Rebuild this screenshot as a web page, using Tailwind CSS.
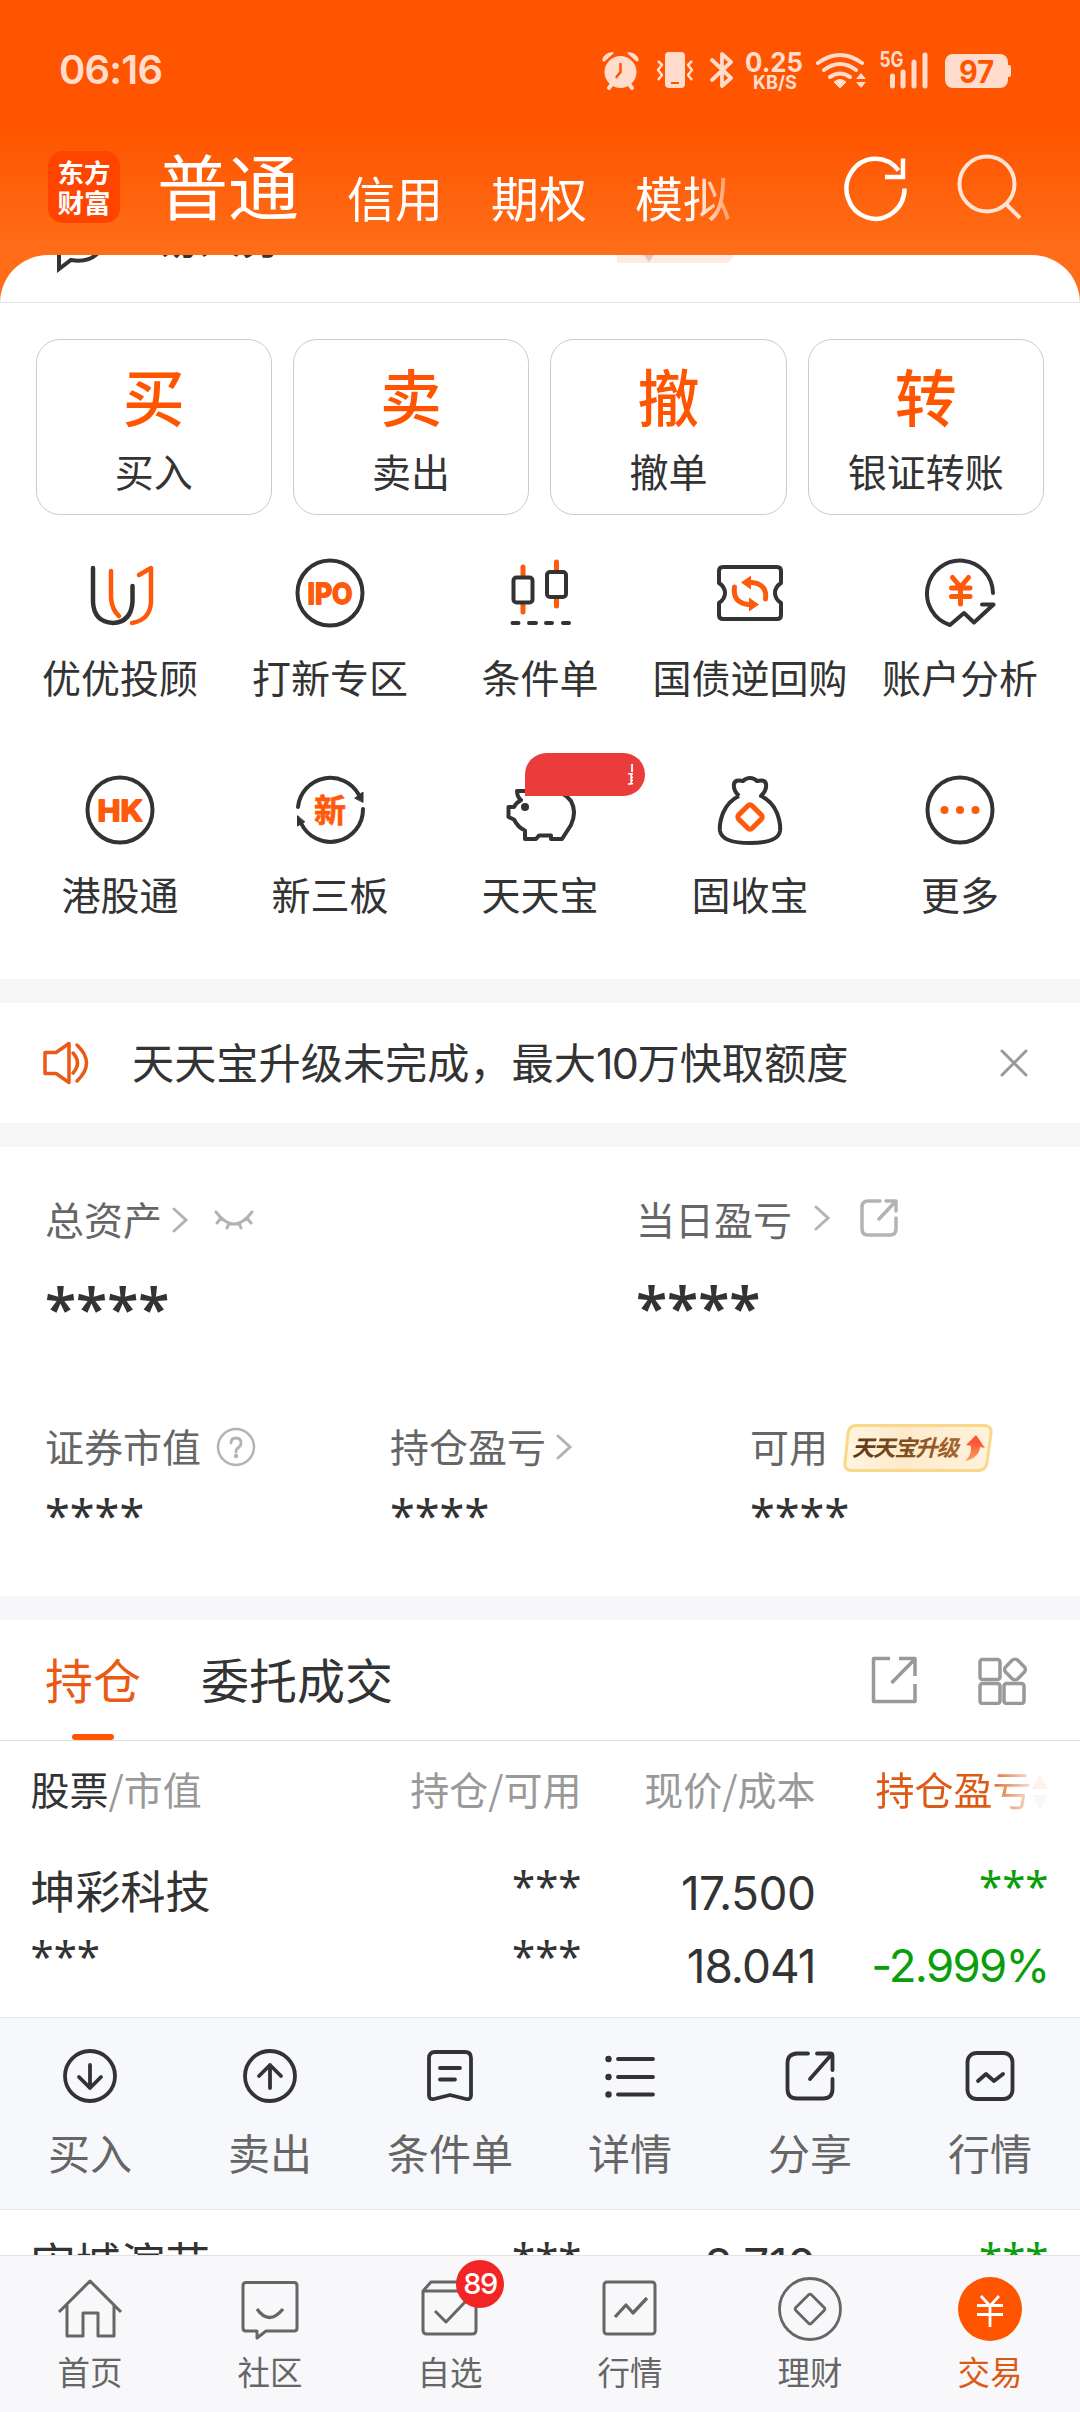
<!DOCTYPE html>
<html lang="zh-CN">
<head>
<meta charset="utf-8">
<title>交易</title>
<script src="https://cdn.jsdelivr.net/npm/@tailwindcss/browser@4"></script>
</head>
<body class="w-[1080px] h-[2412px] overflow-hidden bg-white font-['Noto_Sans_CJK_SC',sans-serif] font-normal text-[#333] whitespace-nowrap">
<div class="flex flex-col h-[2412px] w-[1080px]">

  <!-- Header -->
  <header class="h-[303px] shrink-0 flex flex-col bg-[linear-gradient(#ff5500_0px,#ff5500_130px,#ff6d18_250px)]">
    <div class="h-[140px] shrink-0 flex items-center pl-[59px] pr-[69px] text-[#ffdccc]">
      <span class="font-['Inter',sans-serif] font-semibold text-[40px] tracking-[-0.8px] leading-[60px]">06:16</span>
      <svg class="ml-auto shrink-0" width="410" height="44" viewBox="601 48 410 44" fill="none">
        <!-- alarm -->
        <g fill="#ffdccc">
          <circle cx="620.500" cy="72" r="16"/>
          <path d="M603 60a9 9 0 0 1 10-7l-9 8zM638 60a9 9 0 0 0-10-7l9 8z" stroke="#ffdccc" stroke-width="1.500" stroke-linejoin="round"/>
        </g>
        <path d="M612 84l-3 4M629 84l3 4" stroke="#ffdccc" stroke-width="4" stroke-linecap="round"/>
        <path d="M620.500 64v8l-4 5" stroke="#ff5500" stroke-width="2.500" stroke-linecap="round"/>
        <!-- vibrate -->
        <rect x="665" y="52" width="20" height="36" rx="4" fill="#ffdccc"/>
        <path d="M671 83h8" stroke="#ff5500" stroke-width="2"/>
        <path d="M658 61l4 4-4 5 4 5-4 5M692 61l-4 4 4 5-4 5 4 5" stroke="#ffdccc" stroke-width="2.500" stroke-linejoin="round"/>
        <!-- bluetooth -->
        <path d="M712 60l19 18-9 8V54l9 8-19 18" stroke="#ffdccc" stroke-width="3.800" stroke-linejoin="round" stroke-linecap="round"/>
        <!-- network speed -->
        <text x="745" y="71.500" font-family="Inter" font-weight="700" font-size="27.500" fill="#ffdccc" textLength="58" lengthAdjust="spacingAndGlyphs">0.25</text>
        <text x="753" y="89" font-family="Inter" font-weight="700" font-size="18.500" fill="#ffdccc" textLength="44" lengthAdjust="spacingAndGlyphs">KB/S</text>
        <!-- wifi -->
        <g stroke="#ffdccc" stroke-width="4" stroke-linecap="round">
          <path d="M818 63q22-16 44 0M824 70q16-12 32 0M830 77q10-7 20 0"/>
        </g>
        <path d="M834 82q6-5 12 0l-6 6z" fill="#ffdccc" stroke="#ffdccc" stroke-linejoin="round"/>
        <path d="M856 79l5-6 5 6zM856 82l5 6 5-6z" fill="#ffdccc"/>
        <!-- signal -->
        <text x="879.500" y="67" font-family="Inter" font-weight="700" font-size="21" fill="#ffdccc" textLength="24" lengthAdjust="spacingAndGlyphs">5G</text>
        <path d="M892.500 76v10M903 72v14M914 62v24M925 55v31" stroke="#ffdccc" stroke-width="5" stroke-linecap="round"/>
        <!-- battery -->
        <rect x="945" y="54" width="63" height="34" rx="8" fill="#ffdccc"/>
        <rect x="1005" y="65" width="6" height="12" rx="2" fill="#ffdccc"/>
        <text x="959" y="82.500" font-family="Inter" font-weight="700" font-size="31" fill="#ff5500" textLength="35" lengthAdjust="spacingAndGlyphs">97</text>
      </svg>
    </div>
    <div class="h-[115px] shrink-0 flex items-start pl-[48px] pr-[58px] text-white">
      <div class="mt-[11px] w-[72px] h-[72px] rounded-[15px] bg-[#ff4400] flex flex-col items-center justify-center text-[26.500px] leading-[30px] font-bold">
        <span>东方</span><span>财富</span>
      </div>
      <span class="ml-[37px] mt-[3px] w-[144px] text-[71px] leading-[80px]">普通</span>
      <div class="ml-[46px] mt-[26px] flex gap-[48px] text-[48px] leading-[60px] [mask-image:linear-gradient(to_right,black_345px,transparent_405px)] w-[420px]">
        <span class="w-[96px]">信用</span><span class="w-[96px]">期权</span><span class="w-[96px]">模拟</span>
      </div>
      <svg class="ml-auto mt-[10px] shrink-0" width="180" height="74" viewBox="842 150 180 74" fill="none" stroke="white" stroke-width="4.500">
        <path d="M904.500 188.500a29 30 0 1 1-6-18M903 158.500v18.500h-18"/>
        <g stroke="#ffe3d4" stroke-width="4"><ellipse cx="987" cy="184" rx="27.500" ry="27.500"/><path d="M1006 204l14 14"/></g>
      </svg>
    </div>
    <div class="h-[48px] shrink-0 rounded-t-[48px] bg-white border-b border-[#e5e5e5] overflow-hidden flex items-start">
      <svg class="ml-[57px] shrink-0" width="50" height="24" viewBox="57 255 50 24" fill="none" stroke="#333" stroke-width="4"><path d="M59 245v20l0-8v12l12-9q16 3 26-6l4-6"/></svg>
      <span class="ml-[50px] -mt-[49px] w-[135px] text-[42px] leading-[60px] font-medium">易人分</span>
      <div class="ml-[325px] w-[116px] h-[8px] bg-[#fdece4] rounded-bl-[12px] rounded-br-[30px] flex"><svg class="ml-[27px]" width="10" height="7"><path d="M0 0h10L5 7z" fill="#e5c4b6"/></svg></div>
    </div>
  </header>

  <!-- Quick trade cards -->
  <section class="shrink-0 pt-[36px] pl-[35.500px] pr-[36px] grid grid-cols-4 gap-[21px] text-center">
    <div class="h-[176px] border border-[#ccc] rounded-[24px] flex flex-col items-center"><span class="mt-[23px] h-[64px] leading-[64px] text-[62px] text-[#ff5500] font-medium">买</span><span class="mt-[22px] text-[39px] leading-[42px]">买入</span></div>
    <div class="h-[176px] border border-[#ccc] rounded-[24px] flex flex-col items-center"><span class="mt-[23px] h-[64px] leading-[64px] text-[62px] text-[#ff5500] font-medium">卖</span><span class="mt-[22px] text-[39px] leading-[42px]">卖出</span></div>
    <div class="h-[176px] border border-[#ccc] rounded-[24px] flex flex-col items-center"><span class="mt-[23px] h-[64px] leading-[64px] text-[62px] text-[#ff5500] font-medium">撤</span><span class="mt-[22px] text-[39px] leading-[42px]">撤单</span></div>
    <div class="h-[176px] border border-[#ccc] rounded-[24px] flex flex-col items-center"><span class="mt-[23px] h-[64px] leading-[64px] text-[62px] text-[#ff5500] font-medium">转</span><span class="mt-[22px] text-[39px] leading-[42px]">银证转账</span></div>
  </section>

  <!-- Feature grid -->
  <section class="shrink-0 h-[464px] pt-[42px] px-[15px] grid grid-cols-5 auto-rows-[142px] gap-y-[75px] text-[39px] leading-[42px]">
    <div class="flex flex-col items-center gap-[26px]">
      <svg width="72" height="72" fill="none" stroke-width="4.500" stroke-linecap="round" stroke-linejoin="round"><path stroke="#333" d="M9 11v34q1 20 20 21 18-1 19.500-21V29"/><path stroke="#ff5a0c" d="M27 14v27q1 12 8 18M55 18l12-7v34q-1 18-19 21"/></svg>
      <span>优优投顾</span></div>
    <div class="flex flex-col items-center gap-[26px]">
      <svg width="72" height="72" fill="none"><circle cx="36" cy="36" r="32.500" stroke="#333" stroke-width="4"/><text x="13.500" y="46.500" font-family="Inter" font-size="29" font-weight="700" fill="#ff5a0c" stroke="#ff5a0c" stroke-width="1.800" stroke-linejoin="round" textLength="45" lengthAdjust="spacingAndGlyphs">IPO</text></svg>
      <span>打新专区</span></div>
    <div class="flex flex-col items-center gap-[26px]">
      <svg width="72" height="72" fill="none" stroke-width="5" stroke-linecap="round"><path stroke="#ff5a0c" d="M19 10v8M19 47v8M52.500 5v8M52.500 42v7"/><path stroke="#333" stroke-width="4" d="M8.500 66h6M25 66h7M42 66h6M59 66h6"/><rect x="9.500" y="20.500" width="19" height="25" rx="3" stroke="#333" stroke-width="4"/><rect x="43" y="15" width="19" height="25" rx="3" stroke="#333" stroke-width="4"/></svg>
      <span>条件单</span></div>
    <div class="flex flex-col items-center gap-[26px]">
      <svg width="72" height="72" fill="none" stroke-linejoin="round" stroke-linecap="round"><path stroke="#333" stroke-width="4" d="M9 10H63q4 0 4 4V26q-6 4-6 10t6 10V58q0 4-4 4H9q-4 0-4-4V46q6-4 6-10T5 26V14q0-4 4-4z"/><path stroke="#ff5a0c" stroke-width="5" d="M20.500 30q-2 16 14 17.500h5M51.500 42q2-15-14-16.500h-5"/><path fill="#ff5a0c" d="M27 25.500L37 18.500v14zM45 47.500L35 40.500v14z"/></svg>
      <span>国债逆回购</span></div>
    <div class="flex flex-col items-center gap-[26px]">
      <svg width="72" height="72" fill="none" stroke-linejoin="round" stroke-linecap="round"><path stroke="#333" stroke-width="4" d="M69 36A33 33 0 1 0 26 68L40 56 50 65.500 69.500 47.500H58"/><path stroke="#ff5a0c" stroke-width="5" d="M28.500 20.500L36.500 30l8-9.500M36.500 30v17M27.500 31h18.500M27.500 39.500h18.500"/></svg>
      <span>账户分析</span></div>
    <div class="flex flex-col items-center gap-[26px]">
      <svg width="72" height="72" fill="none"><circle cx="36" cy="36" r="32.500" stroke="#333" stroke-width="4"/><text x="13.500" y="46.500" font-family="Inter" font-size="29" font-weight="700" fill="#ff5a0c" stroke="#ff5a0c" stroke-width="1.800" stroke-linejoin="round" textLength="45" lengthAdjust="spacingAndGlyphs">HK</text></svg>
      <span>港股通</span></div>
    <div class="flex flex-col items-center gap-[26px]">
      <svg width="72" height="72" fill="none" stroke-linecap="round"><path stroke="#333" stroke-width="4" d="M4 33A32.500 32.500 0 0 1 65 21M69 35A32.500 32.500 0 0 1 7 49"/><path fill="#333" stroke="#333" stroke-linejoin="round" d="M61 24l8-6v10zM3.500 42v10l7-4z"/><text x="20" y="47.500" font-family="Noto Sans CJK SC" font-size="32" font-weight="700" fill="#ff5a0c" stroke="#ff5a0c" stroke-width=".7">新</text></svg>
      <span>新三板</span></div>
    <div class="relative flex flex-col items-center gap-[26px]">
      <svg width="72" height="72" fill="none" stroke-linejoin="round"><path stroke="#333" stroke-width="4" d="M26 17H13q0 6 4 9-5 3-7 7H4.500v10l5.500 2.500q4 8 11 11V65h11l3-3.500h12V65h11l9-14q6-13 0-24-7-10-22-10"/><circle cx="21" cy="33" r="4" fill="#333"/></svg>
      <span>天天宝</span>
      <div class="absolute left-[90px] -top-[21px] w-[120px] h-[43px] bg-[#eb3c3c] rounded-[22px] rounded-bl-none text-white"><span class="block ml-[102px] mt-[4px] w-[6px] overflow-hidden text-[24px] leading-[34px]">最</span></div></div>
    <div class="flex flex-col items-center gap-[26px]">
      <svg width="72" height="72" fill="none" stroke-linejoin="round"><path stroke="#333" stroke-width="4" d="M25 22q-6-6-5-12 1-5 9-3 3-3 7-3t7 3q8-2 9 3 1 6-5 12 11 5 16 17 4 11 3 18Q64 69 36 69T6 57q-1-7 3-18 5-12 16-17"/><rect x="26.500" y="33.500" width="19" height="19" rx="3" transform="rotate(45 36 43)" stroke="#ff5a0c" stroke-width="5"/></svg>
      <span>固收宝</span></div>
    <div class="flex flex-col items-center gap-[26px]">
      <svg width="72" height="72" fill="none"><circle cx="36" cy="36" r="32.500" stroke="#333" stroke-width="4"/><g fill="#ff5a0c"><circle cx="20.500" cy="36" r="4"/><circle cx="36" cy="36" r="4"/><circle cx="51.500" cy="36" r="4"/></g></svg>
      <span>更多</span></div>
  </section>

  <div class="h-[24px] shrink-0 bg-[#f7f7fa]"></div>

  <!-- Notice -->
  <section class="h-[120px] shrink-0 flex items-center pl-[42px] pr-[52px]">
    <svg width="50" height="44" viewBox="42 1041 50 44" fill="none" stroke="#ea5a14" stroke-width="3.500" stroke-linejoin="round" stroke-linecap="round"><path d="M45 1052.500h11l13-9v39l-13-9H45zM73 1053q9 10 0 20M77 1045q19 18 0 36"/></svg>
    <span class="ml-[40px] -mt-[3px] text-[42.200px] leading-[60px]">天天宝升级未完成<span class="inline-block w-[42px]">，</span>最大<span class="font-['Inter'] text-[43px] tracking-[-1.500px]">10</span>万快取额度</span>
    <svg class="ml-auto" width="28" height="28" stroke="#999" stroke-width="3" stroke-linecap="round"><path d="M2 2l24 24M26 2L2 26"/></svg>
  </section>

  <div class="h-[24px] shrink-0 bg-[#f7f7fa]"></div>

  <!-- Assets -->
  <section class="h-[449px] shrink-0 pl-[45px] pt-[50px] text-[39px] leading-[42px] text-[#666]">
    <div class="grid grid-cols-[591px_1fr]">
      <div>
        <div class="flex items-center"><span class="w-[117px]">总资产</span>
          <svg class="ml-[10px] mt-[4px]" width="16" height="26" fill="none" stroke="#b3b3b3" stroke-width="3" stroke-linecap="round"><path d="M2 2l12 11L2 24"/></svg>
          <svg class="ml-[26px] mt-[4px]" width="40" height="20" fill="none" stroke="#b3b3b3" stroke-width="3" stroke-linecap="round"><path d="M2 2q18 24 36 0M7 8l-4 5M15 13l-2 5M25 13l2 5M33 8l4 5"/></svg>
        </div>
        <div class="mt-[39px] h-[60px] leading-[60px] text-[57px] font-['Noto_Sans'] font-semibold text-[#333]">****</div>
      </div>
      <div>
        <div class="flex items-center"><span class="w-[156px]">当日盈亏</span>
          <svg class="ml-[22px]" width="16" height="26" fill="none" stroke="#b3b3b3" stroke-width="3" stroke-linecap="round"><path d="M2 2l12 11L2 24"/></svg>
          <svg class="ml-[30px]" width="38" height="38" fill="none" stroke="#b3b3b3" stroke-width="3.500" stroke-linecap="round" stroke-linejoin="round"><path d="M20 2H8Q2 2 2 8v22q0 6 6 6h22q6 0 6-6V19M26 2h10v10M36 2L19 20"/></svg>
        </div>
        <div class="mt-[38px] h-[60px] leading-[60px] text-[57px] font-['Noto_Sans'] font-semibold text-[#333]">****</div>
      </div>
    </div>
    <div class="mt-[86px] grid grid-cols-[345px_360px_1fr]">
      <div>
        <div class="flex items-center h-[42px]"><span class="w-[156px]">证券市值</span>
          <svg class="ml-[15px] mt-[4px]" width="40" height="40" fill="none"><circle cx="20" cy="20" r="18" stroke="#b3b3b3" stroke-width="2.500"/><path d="M15 16q0-5 5-5t5 5q0 3-3 5-2 1-2 4" stroke="#b3b3b3" stroke-width="2.800" stroke-linecap="round"/><circle cx="20" cy="29" r="2.200" fill="#b3b3b3"/></svg></div>
        <div class="mt-[25px] h-[50px] leading-[50px] text-[45px] font-['Noto_Sans'] font-normal text-[#333]">****</div>
      </div>
      <div>
        <div class="flex items-center h-[42px]"><span class="w-[156px]">持仓盈亏</span>
          <svg class="ml-[10px] mt-[4px]" width="16" height="26" fill="none" stroke="#b3b3b3" stroke-width="3" stroke-linecap="round"><path d="M2 2l12 11L2 24"/></svg></div>
        <div class="mt-[25px] h-[50px] leading-[50px] text-[45px] font-['Noto_Sans'] font-normal text-[#333]">****</div>
      </div>
      <div>
        <div class="flex items-center h-[42px]"><span class="w-[78px]">可用</span>
          <svg class="ml-[14px] mt-[5px]" width="152" height="52" viewBox="0 0 152 52" fill="none"><defs><linearGradient id="tag" x1="0" x2="1"><stop offset="0" stop-color="#fff5df"/><stop offset=".4" stop-color="#fdeacb"/><stop offset="1" stop-color="#fff3dc"/></linearGradient><linearGradient id="tx" x1="0" x2="1"><stop offset="0" stop-color="#5a3716"/><stop offset="1" stop-color="#a8672f"/></linearGradient><linearGradient id="ar" x1="0" y1="0" x2="0" y2="1"><stop offset=".3" stop-color="#fd5636"/><stop offset="1" stop-color="#fda060"/></linearGradient></defs>
            <path d="M14 3.500H142q8 0 7 8l-4 29q-1 8-9 8H10q-8 0-7-8l3-29q1-8 8-8z" fill="url(#tag)" stroke="#fad88a" stroke-width="3"/>
            <text x="10" y="34" font-family="Noto Sans CJK SC" font-size="22.500" font-weight="700" font-style="italic" fill="url(#tx)" textLength="107">天天宝升级</text>
            <path d="M134 13l9 13-5-1q-1 11-15 14 7-6 6-15l-5-1z" fill="url(#ar)"/></svg></div>
        <div class="mt-[25px] h-[50px] leading-[50px] text-[45px] font-['Noto_Sans'] font-normal text-[#333]">****</div>
      </div>
    </div>
  </section>

  <div class="h-[24px] shrink-0 bg-[#f7f7fa]"></div>

  <!-- Tabs -->
  <section class="h-[121px] shrink-0 flex items-start pl-[45px] pr-[52px] border-b border-[#ddd] text-[48px]">
    <div class="w-[96px] h-[120px] flex flex-col items-center text-[#ea5a14]"><span class="mt-[28px] leading-[60px]">持仓</span><i class="mt-auto w-[42px] h-[6px] rounded-full bg-[#ff5500]"></i></div>
    <span class="ml-[60px] mt-[28px] leading-[60px]">委托成交</span>
    <svg class="ml-auto mt-[35px]" width="158" height="50" viewBox="870 1655 158 50" fill="none" stroke="#999" stroke-width="3.500"><path stroke-linejoin="round" d="M890 1658.500h-16.500v43H915v-17.500M899 1658.500h16v17.500M915 1659l-23.500 24"/><rect x="980" y="1659.500" width="20" height="20" rx="2.500"/><rect x="980" y="1683.500" width="20" height="20" rx="2.500"/><rect x="1004" y="1683.500" width="20" height="20" rx="2.500"/><rect x="1006.500" y="1661" width="17" height="17" rx="4" transform="rotate(45 1015 1669.500)"/></svg>
  </section>

  <!-- Holdings -->
  <section class="h-[97px] shrink-0 pl-[30.500px] pt-[26px] grid grid-cols-[300px_251px_234px_233px] text-[39px] leading-[42px] text-[#999]">
    <span><span class="text-[#333]">股票</span>/市值</span><span class="text-right">持仓/可用</span><span class="text-right">现价/成本</span>
    <div class="pl-[60px] flex items-start text-[#dd5a16] [mask-image:linear-gradient(to_right,black_170px,rgb(0_0_0/0.1)_220px)]"><span class="w-[155px]">持仓盈亏</span><svg class="mt-[7px] shrink-0" width="18" height="36"><path d="M9 0l8 15H1z" fill="#ff7a40"/><path d="M9 36l8-15H1z" fill="#bbb"/></svg></div>
  </section>
  <section class="h-[179px] shrink-0 pl-[30.500px] grid grid-cols-[300px_251px_234px_233px] grid-rows-[73px_73px] pt-[22px] leading-[60px]">
    <span class="text-[45px]">坤彩科技</span>
    <span class="-mt-[4px] text-right font-['Noto_Sans'] font-normal text-[42px]">***</span>
    <span class="text-right font-['Inter'] font-normal text-[46px] tracking-[-0.5px] pt-[3px]">17.500</span>
    <span class="-mt-[4px] text-right font-['Noto_Sans'] font-normal text-[42px] text-[#0a9e0a]">***</span>
    <span class="-mt-[7px] font-['Noto_Sans'] font-normal text-[42px]">***</span>
    <span class="-mt-[7px] text-right font-['Noto_Sans'] font-normal text-[42px]">***</span>
    <span class="text-right font-['Inter'] font-normal text-[46px] tracking-[-1px] pt-[3px]">18.041</span>
    <span class="text-right font-['Inter'] font-normal text-[45.500px] tracking-[-1.700px] pt-[3px] text-[#0a9e0a]">-2.999%</span>
  </section>

  <!-- Row actions -->
  <section class="h-[193px] shrink-0 grid grid-cols-6 bg-[#f7f8fb] border-y border-[#e8e8ea] text-[42px] leading-[50px] text-[#666]">
    <div class="flex flex-col items-center pt-[30px]"><svg width="56" height="56" fill="none" stroke="#333" stroke-width="3.800" stroke-linecap="round" stroke-linejoin="round"><circle cx="28" cy="28" r="25"/><path d="M28 17v23M17 29l11 11 11-11"/></svg><span class="mt-[23px]">买入</span></div>
    <div class="flex flex-col items-center pt-[30px]"><svg width="56" height="56" fill="none" stroke="#333" stroke-width="3.800" stroke-linecap="round" stroke-linejoin="round"><circle cx="28" cy="28" r="25"/><path d="M28 40V17M17 28l11-11 11 11"/></svg><span class="mt-[23px]">卖出</span></div>
    <div class="flex flex-col items-center pt-[30px]"><svg width="56" height="56" fill="none" stroke="#333" stroke-width="3.800" stroke-linecap="round" stroke-linejoin="round"><path d="M13 4h30q6 0 6 6v37q0 5-5 4l-16-4-16 4q-5 1-5-4V10q0-6 6-6zM18 20h20M18 31.500h15"/></svg><span class="mt-[23px]">条件单</span></div>
    <div class="flex flex-col items-center pt-[30px]"><svg width="56" height="56" fill="none" stroke="#333" stroke-width="3.800" stroke-linecap="round"><path d="M16 11h35M16 29h35M16 46.500h35"/><g fill="#333" stroke="none"><circle cx="6.500" cy="11" r="3.200"/><circle cx="6.500" cy="29" r="3.200"/><circle cx="6.500" cy="46.500" r="3.200"/></g></svg><span class="mt-[23px]">详情</span></div>
    <div class="flex flex-col items-center pt-[30px]"><svg width="56" height="56" fill="none" stroke="#333" stroke-width="3.800" stroke-linecap="round" stroke-linejoin="round"><path d="M26 5.500H15Q5.500 6 5.500 15v26q0 9.500 9.500 9.500h26q9.500 0 9.500-9.500V31M35 5.500h13q2.500 0 2.500 2.500V22M49.500 6.500L28 31"/></svg><span class="mt-[23px]">分享</span></div>
    <div class="flex flex-col items-center pt-[30px]"><svg width="56" height="56" fill="none" stroke="#333" stroke-width="3.800" stroke-linecap="round" stroke-linejoin="round"><rect x="5.500" y="5" width="45" height="46" rx="9"/><path d="M16 33l8-7 8 7 9-7"/></svg><span class="mt-[23px]">行情</span></div>
  </section>

  <section class="h-[45px] shrink-0 overflow-hidden pl-[30.500px] grid grid-cols-[300px_251px_234px_233px] pt-[22px] leading-[60px]">
    <span class="text-[45px]">宋城演艺</span>
    <span class="-mt-[4px] text-right font-['Noto_Sans'] font-normal text-[42px]">***</span>
    <span class="text-right font-['Inter'] font-normal text-[46px] tracking-[-0.5px] pt-[3px]">8.710</span>
    <span class="-mt-[4px] text-right font-['Noto_Sans'] font-normal text-[42px] text-[#0a9e0a]">***</span>
  </section>

  <!-- Bottom navigation -->
  <nav class="h-[157px] shrink-0 grid grid-cols-6 bg-[#f8f8fb] border-t border-[#e2e2e4] text-[32.500px] leading-[40px] text-[#666]">
    <div class="flex flex-col items-center pt-[20px]"><svg width="66" height="66" fill="none" stroke="#666" stroke-width="3" stroke-linejoin="round"><path d="M2 36L33 5l31 31M10 29v31h16V37h15v23h16V29"/></svg><span class="mt-[9px]">首页</span></div>
    <div class="flex flex-col items-center pt-[20px]"><svg width="66" height="66" fill="none" stroke="#666" stroke-width="3" stroke-linejoin="round"><path d="M9 6.500H57q3 0 3 3V52q0 3-3 3H29l-9 7v-7H9q-3 0-3-3V9.500q0-3 3-3z"/><path stroke-width="3.300" d="M20 33q12 17 26 0"/></svg><span class="mt-[9px]">社区</span></div>
    <div class="relative flex flex-col items-center pt-[20px]"><svg width="66" height="66" fill="none" stroke="#666" stroke-width="3" stroke-linejoin="round"><path d="M6 15l8-9H52l7 9V54q0 4-4 4H10q-4 0-4-4zH59M18 35l11 11 20-21"/></svg><span class="mt-[9px]">自选</span>
      <div class="absolute left-[96px] top-[4px] w-[48px] h-[48px] rounded-full bg-[#f32424] text-white text-center font-['Inter'] font-medium text-[29px] tracking-[-1.500px] leading-[48px]">89</div></div>
    <div class="flex flex-col items-center pt-[20px]"><svg width="66" height="66" fill="none" stroke="#666" stroke-width="3" stroke-linejoin="round"><rect x="7" y="6" width="51" height="52" rx="3"/><path stroke-width="3.300" d="M18 41l11-12 7 8 14-15"/></svg><span class="mt-[9px]">行情</span></div>
    <div class="flex flex-col items-center pt-[20px]"><svg width="66" height="66" fill="none" stroke="#666" stroke-width="2.800"><circle cx="33" cy="33" r="30.500"/><rect x="22" y="22" width="22" height="22" rx="2" transform="rotate(45 33 33)"/></svg><span class="mt-[9px]">理财</span></div>
    <div class="flex flex-col items-center pt-[20px] text-[#dd5a16]"><svg width="66" height="66" fill="none" stroke="#fff" stroke-width="2.800"><circle cx="33" cy="33" r="32" fill="#ff5500" stroke="none"/><path d="M24 20l9 10 9-10M33 30v21M20 29.500h26M20 38.500h26"/></svg><span class="mt-[9px]">交易</span></div>
  </nav>
</div>
</body>
</html>
